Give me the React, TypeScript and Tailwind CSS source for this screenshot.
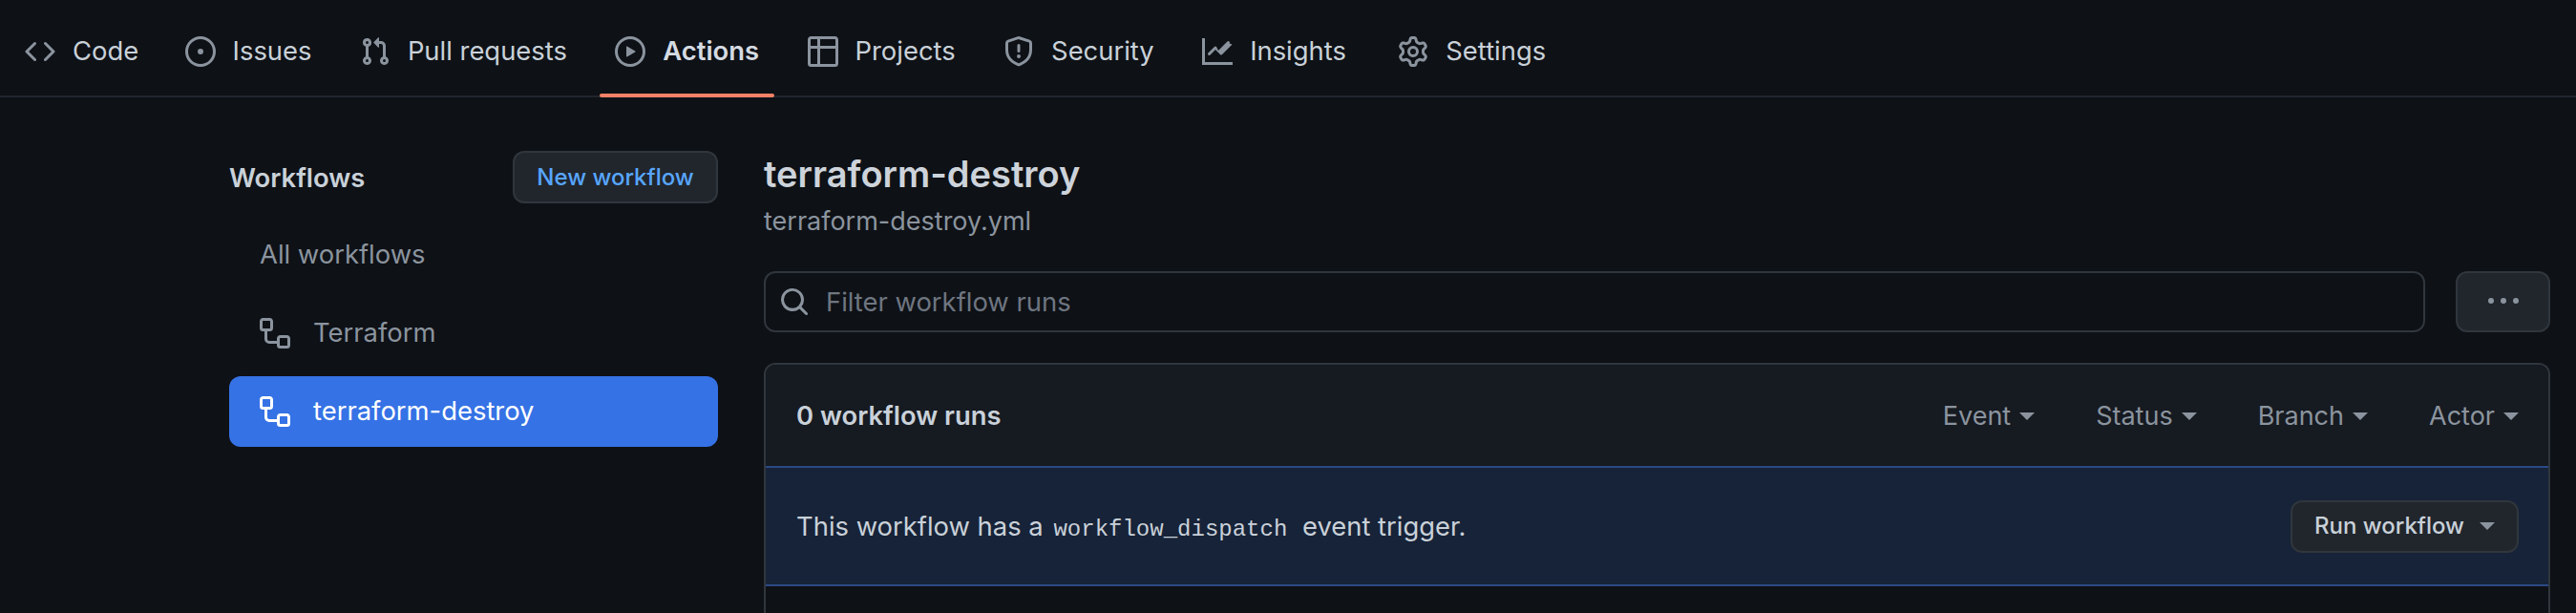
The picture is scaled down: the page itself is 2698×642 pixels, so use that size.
import React from "react";

const icons: Record<string, string> = {
  code: "m11.28 3.22 4.25 4.25a.75.75 0 0 1 0 1.06l-4.25 4.25a.749.749 0 0 1-1.275-.326.749.749 0 0 1 .215-.734L13.94 8l-3.72-3.72a.749.749 0 0 1 .326-1.275.749.749 0 0 1 .734.215Zm-6.56 0a.751.751 0 0 1 1.042.018.751.751 0 0 1 .018 1.042L2.06 8l3.72 3.72a.749.749 0 0 1-.326 1.275.749.749 0 0 1-.734-.215L.47 8.53a.75.75 0 0 1 0-1.06Z",
  issue: "M8 9.5a1.5 1.5 0 1 0 0-3 1.5 1.5 0 0 0 0 3ZM8 0a8 8 0 1 1 0 16A8 8 0 0 1 8 0ZM1.5 8a6.5 6.5 0 1 0 13 0 6.5 6.5 0 0 0-13 0Z",
  pull: "M1.5 3.25a2.25 2.25 0 1 1 3 2.122v5.256a2.251 2.251 0 1 1-1.5 0V5.372A2.25 2.25 0 0 1 1.5 3.25Zm5.677-.177L9.573.677A.25.25 0 0 1 10 .854V2.5h1A2.5 2.5 0 0 1 13.5 5v5.628a2.251 2.251 0 1 1-1.5 0V5a1 1 0 0 0-1-1h-1v1.646a.25.25 0 0 1-.427.177L7.177 3.427a.25.25 0 0 1 0-.354ZM3.75 2.5a.75.75 0 1 0 0 1.5.75.75 0 0 0 0-1.5Zm0 9.5a.75.75 0 1 0 0 1.5.75.75 0 0 0 0-1.5Zm8.25.75a.75.75 0 1 0 1.5 0 .75.75 0 0 0-1.5 0Z",
  play: "M8 0a8 8 0 1 1 0 16A8 8 0 0 1 8 0ZM1.5 8a6.5 6.5 0 1 0 13 0 6.5 6.5 0 0 0-13 0Zm4.879-2.773 4.264 2.559a.25.25 0 0 1 0 .428l-4.264 2.559A.25.25 0 0 1 6 10.559V5.442a.25.25 0 0 1 .379-.215Z",
  table: "M0 1.75C0 .784.784 0 1.75 0h12.5C15.216 0 16 .784 16 1.75v12.5A1.75 1.75 0 0 1 14.25 16H1.75A1.75 1.75 0 0 1 0 14.25ZM6.5 6.5v8h7.75a.25.25 0 0 0 .25-.25V6.5Zm8-1.5V1.75a.25.25 0 0 0-.25-.25H6.5V5Zm-13 1.5v7.75c0 .138.112.25.25.25H5v-8ZM5 5V1.5H1.75a.25.25 0 0 0-.25.25V5Z",
  shield: "M7.467.133a1.748 1.748 0 0 1 1.066 0l5.25 1.68A1.75 1.75 0 0 1 15 3.48V7c0 1.566-.32 3.182-1.303 4.682-.983 1.498-2.585 2.813-5.032 3.855a1.697 1.697 0 0 1-1.33 0c-2.447-1.042-4.049-2.357-5.032-3.855C1.32 10.182 1 8.566 1 7V3.48a1.75 1.75 0 0 1 1.217-1.667Zm.61 1.429a.25.25 0 0 0-.153 0l-5.25 1.68a.25.25 0 0 0-.174.238V7c0 1.358.275 2.666 1.057 3.86.784 1.194 2.121 2.34 4.366 3.297a.196.196 0 0 0 .154 0c2.245-.956 3.582-2.104 4.366-3.298C13.225 9.666 13.5 8.36 13.5 7V3.48a.251.251 0 0 0-.174-.237l-5.25-1.68ZM8.75 4.75v3a.75.75 0 0 1-1.5 0v-3a.75.75 0 0 1 1.5 0ZM9 10.5a1 1 0 1 1-2 0 1 1 0 0 1 2 0Z",
  graph: "M0 1h1.5v12.5H16V15H0Zm15.78 3.28-5.25 5.25a.75.75 0 0 1-1.06 0L7 7.06 4.28 9.78a.751.751 0 0 1-1.042-.018.751.751 0 0 1-.018-1.042l3.25-3.25a.75.75 0 0 1 1.06 0L8.5 7.44l4.72-4.72a.751.751 0 0 1 1.042.018.751.751 0 0 1 .018 1.042Z",
  gear: "M8 0a8.2 8.2 0 0 1 .701.031C9.444.095 9.99.645 10.16 1.29l.288 1.107c.018.066.079.158.212.224.231.114.454.243.668.386.123.082.233.09.299.071l1.103-.303c.644-.176 1.392.021 1.82.63.27.385.506.792.704 1.218.315.675.111 1.422-.364 1.891l-.814.806c-.049.048-.098.147-.088.294.016.257.016.515 0 .772-.01.147.038.246.088.294l.814.806c.475.469.679 1.216.364 1.891a7.977 7.977 0 0 1-.704 1.217c-.428.61-1.176.807-1.82.63l-1.102-.302c-.067-.019-.177-.011-.3.071a5.909 5.909 0 0 1-.668.386c-.133.066-.194.158-.211.224l-.29 1.106c-.168.646-.715 1.196-1.458 1.26a8.006 8.006 0 0 1-1.402 0c-.743-.064-1.289-.614-1.458-1.26l-.289-1.106c-.018-.066-.079-.158-.212-.224a5.738 5.738 0 0 1-.668-.386c-.123-.082-.233-.09-.299-.071l-1.103.303c-.644.176-1.392-.021-1.82-.63a8.12 8.12 0 0 1-.704-1.218c-.315-.675-.111-1.422.363-1.891l.815-.806c.05-.048.098-.147.088-.294a6.214 6.214 0 0 1 0-.772c.01-.147-.038-.246-.088-.294l-.815-.806C.635 6.045.431 5.298.746 4.623a7.92 7.92 0 0 1 .704-1.217c.428-.61 1.176-.807 1.82-.63l1.102.302c.067.019.177.011.3-.071.214-.143.437-.272.668-.386.133-.066.194-.158.211-.224l.29-1.106C6.009.645 6.556.095 7.299.03 7.53.01 7.764 0 8 0Zm-.571 1.525c-.036.003-.108.036-.137.146l-.289 1.105c-.147.561-.549.967-.998 1.189-.173.086-.34.183-.5.29-.417.278-.97.423-1.529.27l-1.103-.303c-.109-.03-.175.016-.195.045-.22.312-.412.644-.573.99-.014.031-.021.11.059.19l.815.806c.411.406.562.957.53 1.456a4.709 4.709 0 0 0 0 .582c.032.499-.119 1.05-.53 1.456l-.815.806c-.081.08-.073.159-.059.19.162.346.353.677.573.989.02.03.085.076.195.046l1.102-.303c.56-.153 1.113-.008 1.53.27.161.107.328.204.501.29.447.222.85.629.997 1.189l.289 1.105c.029.109.101.143.137.146a6.6 6.6 0 0 0 1.142 0c.036-.003.108-.036.137-.146l.289-1.105c.147-.561.549-.967.998-1.189.173-.086.34-.183.5-.29.417-.278.97-.423 1.529-.27l1.103.303c.109.029.175-.016.195-.045.22-.313.411-.644.573-.99.014-.031.021-.11-.059-.19l-.815-.806c-.411-.406-.562-.957-.53-1.456a4.709 4.709 0 0 0 0-.582c-.032-.499.119-1.05.53-1.456l.815-.806c.081-.08.073-.159.059-.19a6.464 6.464 0 0 0-.573-.989c-.02-.03-.085-.076-.195-.046l-1.102.303c-.56.153-1.113.008-1.53-.27a4.44 4.44 0 0 0-.501-.29c-.447-.222-.85-.629-.997-1.189l-.289-1.105c-.029-.11-.101-.143-.137-.146a6.6 6.6 0 0 0-1.142 0ZM11 8a3 3 0 1 1-6 0 3 3 0 0 1 6 0ZM9.5 8a1.5 1.5 0 1 0-3.001.001A1.5 1.5 0 0 0 9.5 8Z",
  workflow: "M0 1.75C0 .784.784 0 1.75 0h3.5C6.216 0 7 .784 7 1.75v3.5A1.75 1.75 0 0 1 5.25 7H4v4a1 1 0 0 0 1 1h4v-1.25C9 9.784 9.784 9 10.75 9h3.5c.966 0 1.75.784 1.75 1.75v3.5A1.75 1.75 0 0 1 14.25 16h-3.5A1.75 1.75 0 0 1 9 14.25v-.75H5A2.5 2.5 0 0 1 2.5 11V7h-.75A1.75 1.75 0 0 1 0 5.25Zm1.75-.25a.25.25 0 0 0-.25.25v3.5c0 .138.112.25.25.25h3.5a.25.25 0 0 0 .25-.25v-3.5a.25.25 0 0 0-.25-.25Zm9 9a.25.25 0 0 0-.25.25v3.5c0 .138.112.25.25.25h3.5a.25.25 0 0 0 .25-.25v-3.5a.25.25 0 0 0-.25-.25Z",
  search: "M10.68 11.74a6 6 0 0 1-7.922-8.982 6 6 0 0 1 8.982 7.922l3.04 3.04a.749.749 0 0 1-.326 1.275.749.749 0 0 1-.734-.215ZM11.5 7a4.499 4.499 0 1 0-8.997 0A4.499 4.499 0 0 0 11.5 7Z",
  kebab: "M8 9a1.5 1.5 0 1 0 0-3 1.5 1.5 0 0 0 0 3ZM1.5 9a1.5 1.5 0 1 0 0-3 1.5 1.5 0 0 0 0 3Zm13 0a1.5 1.5 0 1 0 0-3 1.5 1.5 0 0 0 0 3Z",
};

const Octicon = ({ name, className }: { name: string; className?: string }) => (
  <svg viewBox="0 0 16 16" fill="currentColor" className={className}>
    <path d={icons[name]} />
  </svg>
);

const Caret = ({ className }: { className?: string }) => (
  <span className={`inline-block w-0 h-0 border-x-[8px] border-x-transparent border-t-[8px] ${className}`} />
);

const tabs = [
  { label: "Code", icon: "code", extra: "-mr-[2px]" },
  { label: "Issues", icon: "issue" },
  { label: "Pull requests", icon: "pull" },
  { label: "Actions", icon: "play", active: true },
  { label: "Projects", icon: "table" },
  { label: "Security", icon: "shield" },
  { label: "Insights", icon: "graph" },
  { label: "Settings", icon: "gear", extra: "ml-[4px]" },
];

const filters = ["Event", "Status", "Branch", "Actor"];

export default function App() {
  return (
    <div className="h-[642px] overflow-hidden flex flex-col bg-[#0e1116] text-[#c9d1d9] font-['Inter',sans-serif] text-[27.4px]">
      <nav className="h-[102px] shrink-0 flex pl-[10px] gap-[18.4px] border-b-2 border-[#21262d]">
        {tabs.map((tab) => (
          <div key={tab.label} className={`relative h-[100px] flex items-center gap-[18px] px-4 pt-2 ${tab.extra ?? ""}`}>
            <Octicon name={tab.icon} className="w-8 h-8 text-[#8b949e]" />
            <span className={tab.active ? "font-semibold text-[#d5dbe2]" : ""}>{tab.label}</span>
            {tab.active && (
              <span className="absolute left-0 right-0 -bottom-[2px] h-1 rounded-sm bg-[#f78166]" />
            )}
          </div>
        ))}
      </nav>

      <div className="flex-1 min-h-0 flex pl-[240px] pr-[27px]">
        <aside className="w-[512px] shrink-0 pt-[56px]">
          <div className="flex items-center justify-between h-[55px]">
            <span className="font-semibold pt-[2px]">Workflows</span>
            <button className="h-[55px] w-[215px] rounded-xl border-2 border-[#30363d] bg-[#21262d] text-[#58a6ff] text-[24px] font-medium">
              New workflow
            </button>
          </div>
          <div className="mt-[17px] flex flex-col gap-[8px] text-[#8b949e]">
            <div className="h-[74px] flex items-center pl-8">All workflows</div>
            <div className="h-[74px] flex items-center gap-6 pl-8">
              <Octicon name="workflow" className="w-8 h-8" />
              <span>Terraform</span>
            </div>
            <div className="h-[74px] flex items-center gap-6 pl-8 rounded-xl bg-[#3572e5] text-white">
              <Octicon name="workflow" className="w-8 h-8" />
              <span>terraform-destroy</span>
            </div>
          </div>
        </aside>

        <main className="flex-1 min-w-0 ml-[48px] flex flex-col pt-[54px]">
          <h1 className="text-[38px] leading-[52px] font-semibold text-[#cdd3da]">terraform-destroy</h1>
          <p className="mt-[4px] leading-[40px] text-[27px] text-[#8b949e]">terraform-destroy.yml</p>

          <div className="mt-[32px] flex gap-[32px]">
            <div className="flex-1 h-[64px] flex items-center gap-[17px] pl-[14px] rounded-xl border-2 border-[#30363d] text-[#6e7681]">
              <Octicon name="search" className="w-8 h-8 text-[#8b949e]" />
              <span className="pt-[2px]">Filter workflow runs</span>
            </div>
            <button className="w-[99px] h-[64px] flex items-center justify-center rounded-xl border-2 border-[#30363d] bg-[#21262d] text-[#8b949e]">
              <Octicon name="kebab" className="w-8 h-8" />
            </button>
          </div>

          <section className="mt-[32px] flex-1 rounded-t-xl border-x-2 border-t-2 border-[#30363d]">
            <div className="h-[106px] flex items-center justify-between pl-[32px] pr-[31px] pt-[2px] rounded-t-[10px] bg-[#161a21]">
              <span className="font-semibold">0 workflow runs</span>
              <div className="flex items-center gap-[64px] text-[#8b949e] text-[27px]">
                {filters.map((filter) => (
                  <div key={filter} className="flex items-center gap-[9px]">
                    <span>{filter}</span>
                    <Caret className="border-t-[#8b949e]" />
                  </div>
                ))}
              </div>
            </div>
            <div className="h-[126px] flex items-center justify-between pl-[32px] pr-[31px] border-y-2 border-[#2a4a85] bg-[#172338]">
              <span className="pt-[2px]">
                This workflow has a{" "}
                <code className="font-['Liberation_Mono',monospace] text-[24px] ml-[3px] mr-[8px]">workflow_dispatch</code>{" "}
                event trigger.
              </span>
              <button className="w-[239px] h-[55px] flex items-center justify-center gap-[16px] rounded-xl border-2 border-[#30363d] bg-[#21262d] text-[24px] font-medium">
                Run workflow
                <Caret className="border-t-[#8b949e]" />
              </button>
            </div>
          </section>
        </main>
      </div>
    </div>
  );
}
